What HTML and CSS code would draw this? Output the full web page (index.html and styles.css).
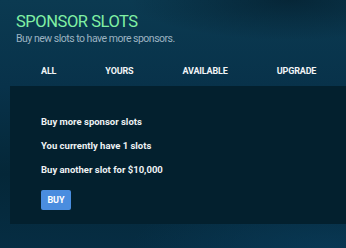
FILE: index.html
```html
<!DOCTYPE html>
<html>
<head>
<meta charset="utf-8">
<link rel="stylesheet" href="styles.css">
</head>
<body>
<div class="page">
  <header class="head">
    <h1 class="title">SPONSOR SLOTS</h1>
    <p class="subtitle">Buy new slots to have more sponsors.</p>
  </header>
  <nav class="tabs">
    <span class="tab">ALL</span>
    <span class="tab">YOURS</span>
    <span class="tab">AVAILABLE</span>
    <span class="tab">UPGRADE</span>
  </nav>
  <section class="panel">
    <p class="line">Buy more sponsor slots</p>
    <p class="line">You currently have 1 slots</p>
    <p class="line">Buy another slot for $10,000</p>
    <button class="buy">BUY</button>
  </section>
</div>
</body>
</html>
```
FILE: styles.css
```css
html, body {
  margin: 0;
  padding: 0;
}
body {
  width: 346px;
  height: 248px;
  overflow: hidden;
  font-family: Roboto, "Open Sans", sans-serif;
  background-color: #0a3248;
}
.page {
  height: 248px;
  background:
    radial-gradient(ellipse 160px 40px at 290px 0px, rgba(2, 22, 34, 0.55), rgba(2, 22, 34, 0) 100%),
    radial-gradient(ellipse 200px 60px at 330px 248px, rgba(10, 60, 90, 0.7), rgba(10, 60, 90, 0) 100%),
    linear-gradient(180deg, #0b3a51 0%, #08324a 35%, #042738 70%, #062d43 100%);
}
.head {
  padding: 12px 0 0 16px;
}
.title {
  margin: 0;
  font-size: 16.5px;
  font-weight: 400;
  line-height: 20px;
  color: #80f0a4;
  letter-spacing: -0.45px;
}
.subtitle {
  margin: 0;
  font-size: 10.5px;
  line-height: 13px;
  color: #9cb3c1;
  letter-spacing: -0.5px;
}
.tabs {
  display: flex;
  gap: 49px;
  padding: 20px 0 9px 41px;
}
.tab {
  font-size: 9px;
  font-weight: 700;
  color: #f2f5f7;
  line-height: 12px;
  letter-spacing: -0.15px;
}
.panel {
  margin-left: 10px;
  height: 138px;
  background: #03202e;
  padding: 30px 0 0 31px;
  box-sizing: border-box;
}
.line {
  margin: 0 0 12px;
  font-size: 9.5px;
  font-weight: 700;
  color: #eef2f4;
  line-height: 12px;
}
.buy {
  display: block;
  margin-top: 14px;
  width: 30px;
  height: 20px;
  border: 0;
  border-radius: 2px;
  background: #4a8ddf;
  color: #fff;
  font-family: inherit;
  font-size: 9px;
  font-weight: 700;
  padding: 0;
}
```
